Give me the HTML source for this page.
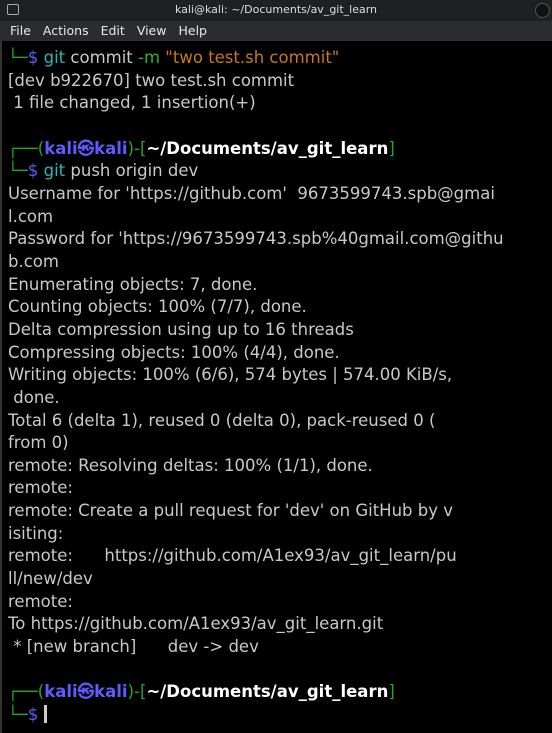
<!DOCTYPE html>
<html><head><meta charset="utf-8"><style>
body{margin:0;width:552px;height:733px;background:#000;overflow:hidden;font-family:"DejaVu Sans","Liberation Sans",sans-serif}
.title{position:absolute;left:0;top:0;width:552px;height:21px;background:#1f2023;color:#ddd;font-size:11px;text-align:center;line-height:20px}
.ticon{position:absolute;left:7px;top:4px;width:10px;height:9px;border:1px solid #aaa;border-radius:2px}
.circ{position:absolute;right:2px;top:3px;width:13px;height:13px;border-radius:50%;background:#111;border:1px solid #555}
.menu{position:absolute;left:0;top:21px;width:552px;height:20px;background:#2b2c2f;color:#e8e8e8;font-size:12.5px;line-height:20px}
.menu span{margin-left:10px;margin-right:2px}
.term{position:absolute;left:0;top:41px;width:550px;height:692px;border-left:2px solid #333}
.lines{position:absolute;left:6px;top:6px;font-size:16.5px;line-height:22.65px;color:#c8c8c8;white-space:pre;letter-spacing:0}
.b{color:#5b5bf5}.c{color:#2fb5b5}.g{color:#2fb12f}.o{color:#c7781a}.p{color:#1faa1f}.k{color:#5c5cff;font-weight:bold}.w{color:#fff;font-weight:bold}
.cur{display:inline-block;width:3px;height:18px;background:#ccc;vertical-align:-3px}
</style></head><body>
<div class="title"><div class="ticon"></div>kali@kali: ~/Documents/av_git_learn<div class="circ"></div></div>
<div class="menu"><span>File</span><span>Actions</span><span>Edit</span><span>View</span><span>Help</span></div>
<div class="term"><div class="lines"><span class="p">└─</span><span class="b">$</span> <span class="c">git</span> commit <span class="g">-m</span> <span class="o">"two test.sh commit"</span>
[dev b922670] two test.sh commit
 1 file changed, 1 insertion(+)

<span class="p">┌──(</span><span class="k">kali㉿kali</span><span class="p">)-[</span><span class="w">~/Documents/av_git_learn</span><span class="p">]</span>
<span class="p">└─</span><span class="b">$</span> <span class="c">git</span> push origin dev
Username for 'https://github.com'  9673599743.spb@gmai
l.com
Password for 'https://9673599743.spb%40gmail.com@githu
b.com
Enumerating objects: 7, done.
Counting objects: 100% (7/7), done.
Delta compression using up to 16 threads
Compressing objects: 100% (4/4), done.
Writing objects: 100% (6/6), 574 bytes | 574.00 KiB/s,
 done.
Total 6 (delta 1), reused 0 (delta 0), pack-reused 0 (
from 0)
remote: Resolving deltas: 100% (1/1), done.
remote: 
remote: Create a pull request for 'dev' on GitHub by v
isiting:
remote:      https://github.com/A1ex93/av_git_learn/pu
ll/new/dev
remote: 
To https://github.com/A1ex93/av_git_learn.git
 * [new branch]      dev -> dev

<span class="p">┌──(</span><span class="k">kali㉿kali</span><span class="p">)-[</span><span class="w">~/Documents/av_git_learn</span><span class="p">]</span>
<span class="p">└─</span><span class="b">$</span> <span class="cur"></span></div></div>
</body></html>
